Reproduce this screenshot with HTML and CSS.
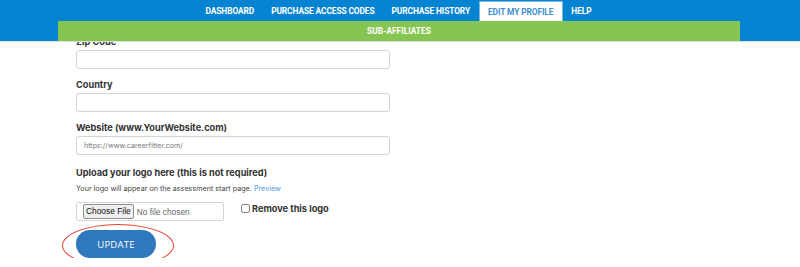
FILE: index.html
```html
<!DOCTYPE html>
<html lang="en">

<head>
    <meta charset="UTF-8">
    <meta name="viewport" content="width=device-width, initial-scale=1.0">
    <title>Edit My Profile</title>
    <link rel="stylesheet" href="styles.css">
</head>

<body>
    <!-- fixed header, the page is scrolled down under it -->
    <div class="header">
        <ul class="mainNav">
            <li><a href="#">DASHBOARD</a></li>
            <li><a href="#">PURCHASE ACCESS CODES</a></li>
            <li><a href="#">PURCHASE HISTORY</a></li>
            <li class="active"><a href="#">EDIT MY PROFILE</a></li>
            <li><a href="#">HELP</a></li>
        </ul>
        <div class="subNav"><a href="#">SUB-AFFILIATES</a></div>
    </div>

    <div class="content">
        <form class="profileForm">
            <label class="fieldLabel">Zip Code</label>
            <input class="textInput" type="text">

            <label class="fieldLabel">Country</label>
            <input class="textInput" type="text">

            <label class="fieldLabel">Website (www.YourWebsite.com)</label>
            <input class="textInput" type="text" placeholder="https://www.careerfitter.com/">

            <label class="fieldLabel uploadLabel">Upload your logo here (this is not required)</label>
            <p class="hint">Your logo will appear on the assessment start page. <a href="#">Preview</a></p>

            <div class="logoRow">
                <div class="fileBox">
                    <span class="fileBtn">Choose File</span>
                    <span class="fileName">No file chosen</span>
                </div>
                <label class="removeLogo"><input type="checkbox"> Remove this logo</label>
            </div>

            <div class="updateWrap">
                <button class="updateBtn" type="button">UPDATE</button>
                <span class="circleMark"></span>
            </div>
        </form>
    </div>
</body>

</html>
```

FILE: styles.css
```css
        * {
            box-sizing: border-box;
        }

        body {
            margin: 0;
            background: #fff;
            font-family: Inter, "Open Sans", sans-serif;
            color: #333;
        }

        .header {
            position: fixed;
            top: 0;
            left: 0;
            right: 0;
            height: 42px;
            background: #0784d1;
            border-bottom: 1px solid #dcdcdc;
            z-index: 10;
        }

        .mainNav {
            list-style: none;
            margin: 0;
            padding: 0 0 0 197px;
            display: flex;
            height: 21px;
            align-items: stretch;
        }

        .mainNav li {
            display: flex;
            align-items: center;
            padding: 0 8.5px;
            margin-top: 1px;
        }

        .mainNav a {
            color: #fff;
            text-decoration: none;
            font-family: Roboto, sans-serif;
            font-weight: 700;
            font-size: 8.4px;
            letter-spacing: -0.1px;
        }

        .mainNav li.active {
            background: #fff;
            border: 1px solid #7fb6e2;
            border-bottom: none;
        }

        .mainNav li.active a {
            color: #3f8fd0;
        }

        .subNav {
            margin: 0 60px 0 58px;
            height: 20px;
            background: #87c552;
            display: flex;
            align-items: center;
            justify-content: center;
        }

        .subNav a {
            color: #fff;
            text-decoration: none;
            font-family: Roboto, sans-serif;
            font-weight: 700;
            font-size: 8.4px;
        }

        .content {
            padding: 36px 0 0 76px;
        }

        .profileForm {
            width: 314px;
        }

        .fieldLabel {
            display: block;
            font-weight: 700;
            font-size: 9.2px;
            line-height: 11px;
            color: #333;
            margin-bottom: 3px;
        }

        .textInput {
            display: block;
            width: 314px;
            height: 19px;
            border: 1px solid #d4d4d4;
            border-radius: 3px;
            padding: 0 7px;
            margin: 0 0 10px 0;
            font-family: Inter, sans-serif;
            font-size: 7.1px;
            color: #555;
        }

        .textInput + .fieldLabel {
            margin-top: 0.5px;
        }

        .textInput + .uploadLabel {
            margin-top: 12px;
        }

        .textInput::placeholder {
            color: #777;
        }

        .hint {
            margin: 6px 0 8px 0;
            font-size: 7.2px;
            line-height: 10px;
            color: #444;
        }

        .hint a {
            color: #4a9ae0;
            text-decoration: none;
        }

        .logoRow {
            display: flex;
            align-items: flex-start;
        }

        .fileBox {
            width: 148px;
            height: 19px;
            border: 1px solid #d4d4d4;
            border-radius: 2px;
            display: flex;
            align-items: center;
            padding-left: 6px;
            font-family: "Liberation Sans", Arial, sans-serif;
            font-size: 8.4px;
        }

        .fileBtn {
            background: #efefef;
            border: 1px solid #8f8f8f;
            border-radius: 2px;
            padding: 1px 2px;
            color: #111;
            line-height: 11px;
        }

        .fileName {
            margin-left: 3px;
            color: #666;
        }

        .removeLogo {
            display: flex;
            align-items: center;
            margin: 1px 0 0 17px;
            font-weight: 700;
            font-size: 9.2px;
            color: #333;
        }

        .removeLogo input {
            width: 9px;
            height: 9px;
            margin: 0 2px 0 0;
        }

        .updateWrap {
            position: relative;
            width: 80px;
            margin-top: 9px;
        }

        .updateBtn {
            display: block;
            width: 80px;
            height: 28px;
            border: none;
            border-radius: 14px;
            background: #2f78bd;
            color: #fff;
            font-family: "Open Sans", sans-serif;
            font-size: 9.6px;
            letter-spacing: 0.2px;
        }

        /* hand drawn red ring around the button */
        .circleMark {
            position: absolute;
            left: -14px;
            top: -6px;
            width: 112px;
            height: 43px;
            border: 1.5px solid #e0402e;
            border-radius: 50%;
            pointer-events: none;
        }
```
